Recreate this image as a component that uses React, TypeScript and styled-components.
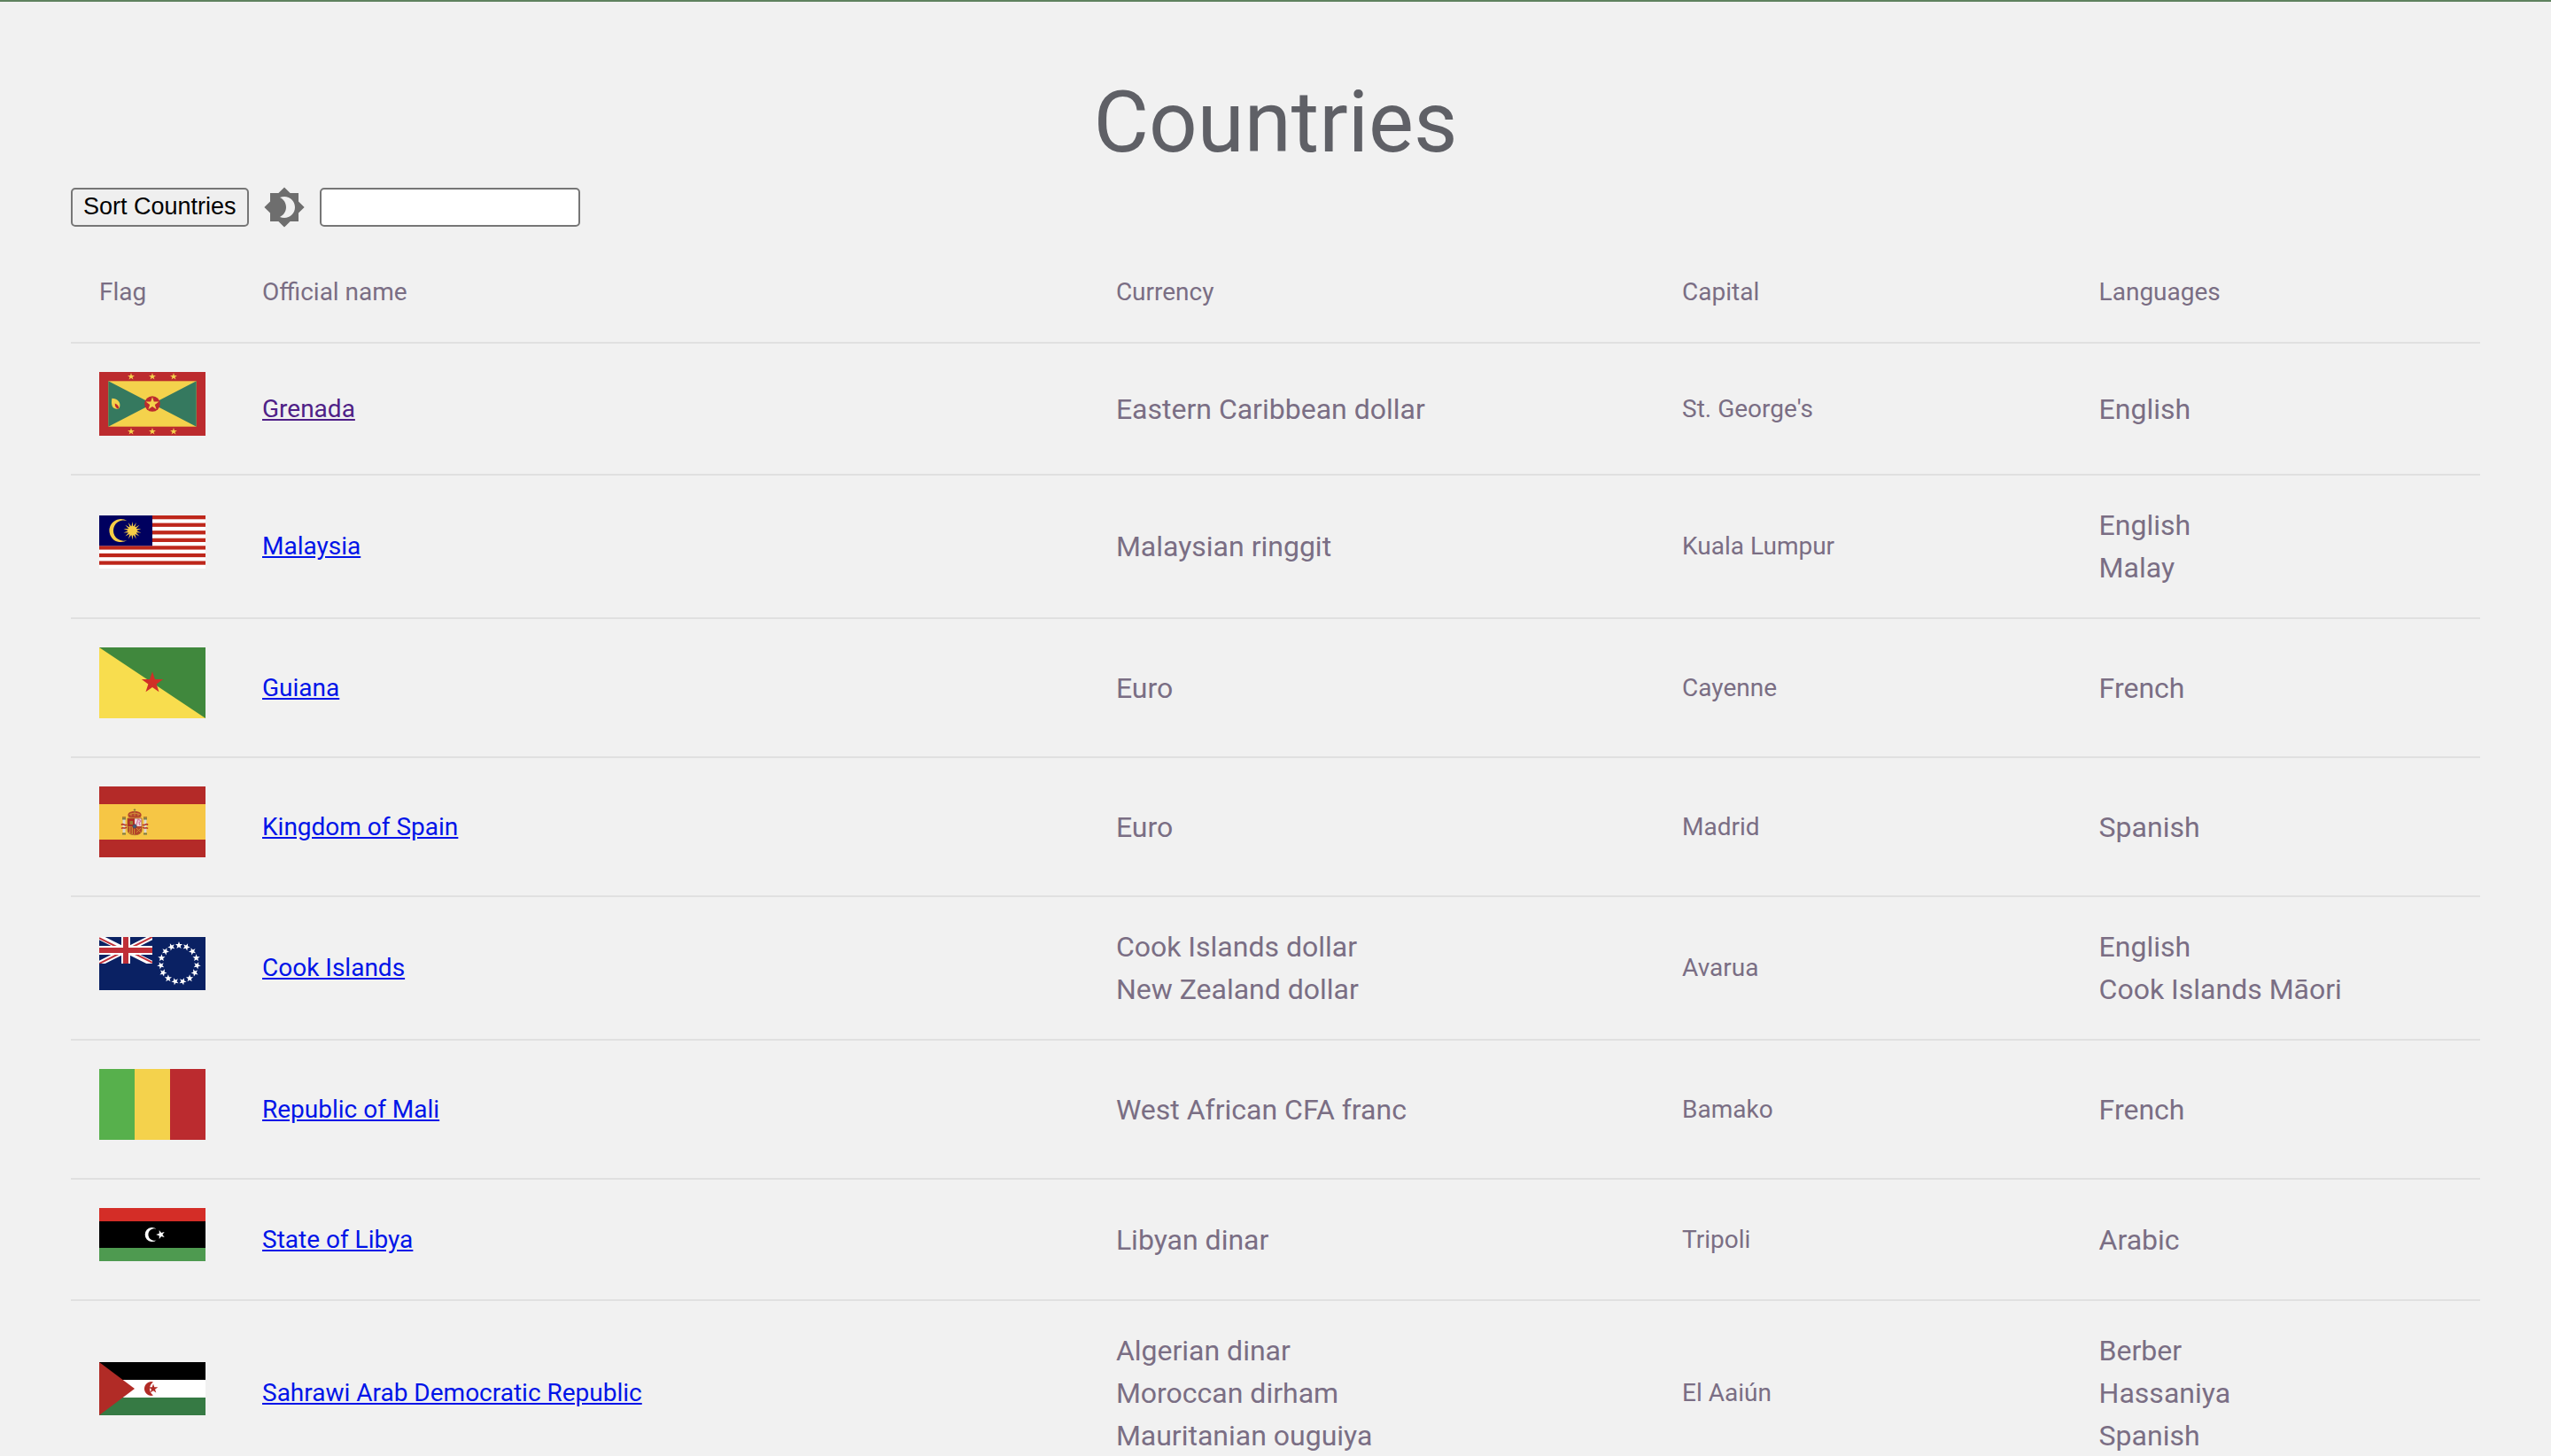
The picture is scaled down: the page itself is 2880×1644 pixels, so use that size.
import React, { useMemo, useState } from 'react';
import styled, { createGlobalStyle } from 'styled-components';

const GlobalStyle = createGlobalStyle`
  *, *::before, *::after { box-sizing: border-box; }
  body {
    margin: 0;
    background: #f1f1f1;
    font-family: Roboto, "Noto Sans", sans-serif;
    -webkit-font-smoothing: antialiased;
  }
`;

const Page = styled.main`
  border-top: 2px solid #5f825f;
  padding: 80px 80px 0;
`;

const Title = styled.h1`
  margin: 0;
  font-size: 96px;
  font-weight: 400;
  line-height: 112px;
  text-align: center;
  color: #5f6066;
`;

const Toolbar = styled.div`
  display: flex;
  align-items: center;
  gap: 16px;
  height: 48px;
  margin: 16px 0;
`;

const SortButton = styled.button`
  height: 44px;
  padding: 0 12px 2px;
  border: 2px solid #767676;
  border-radius: 5px;
  background: #efefef;
  color: #000;
  font: 27px "Liberation Sans", Arial, sans-serif;
`;

const ThemeButton = styled.button`
  display: flex;
  padding: 0;
  border: 0;
  background: none;
  color: #6e6e6e;
`;

const SearchInput = styled.input`
  width: 294px;
  height: 44px;
  padding: 2px 4px;
  border: 2px solid #767676;
  border-radius: 5px;
  background: #fff;
  font: 27px "Liberation Sans", Arial, sans-serif;
`;

const Table = styled.table`
  width: 100%;
  table-layout: fixed;
  border-collapse: separate;
  border-spacing: 0;
  font-size: 28px;
  line-height: 40px;
  color: #7a6e84;
`;

const HeadCell = styled.th<{ $width?: string }>`
  width: ${(p) => p.$width ?? 'auto'};
  padding: 32px;
  border-bottom: 2px solid #e0e0e0;
  font-weight: 400;
  line-height: 48px;
  text-align: left;
`;

const Cell = styled.td`
  padding: 32px;
  border-bottom: 2px solid #e0e0e0;
  vertical-align: middle;
`;

const CountryLink = styled.a<{ $visited?: boolean }>`
  color: ${(p) => (p.$visited ? '#4f1f87' : '#0014e8')};
`;

const List = styled.ul`
  margin: 0;
  padding: 0;
  list-style: none;
  font-size: 32px;
  line-height: 48px;
`;

const FlagSvg = styled.svg`
  width: 120px;
`;

const starPoints = (cx: number, cy: number, r: number, n = 5, inner = 0.382, start = -90) =>
  Array.from({ length: n * 2 }, (_, i) => {
    const a = ((start + (i * 180) / n) * Math.PI) / 180;
    const q = i % 2 ? r * inner : r;
    return `${(cx + q * Math.cos(a)).toFixed(2)},${(cy + q * Math.sin(a)).toFixed(2)}`;
  }).join(' ');

type StarProps = { x: number; y: number; r: number; fill: string; n?: number; inner?: number; start?: number };
const Star = ({ x, y, r, fill, n, inner, start }: StarProps) => (
  <polygon points={starPoints(x, y, r, n, inner, start)} fill={fill} />
);

const Flag = ({ h, label, children }: { h: number; label: string; children: React.ReactNode }) => (
  <FlagSvg viewBox={`0 0 120 ${h}`} height={h} role="img" aria-label={label}>
    {children}
  </FlagSvg>
);

const GrenadaFlag = () => (
  <Flag h={72} label="Flag of Grenada">
    <rect width="120" height="72" fill="#bc2b2e" />
    <rect x="10.3" y="10.3" width="99.4" height="51.4" fill="#f4d24c" />
    <path d="M10.3 10.3 60 36 10.3 61.7zM109.7 10.3 60 36l49.7 25.7z" fill="#35795f" />
    <circle cx="60" cy="36" r="8.8" fill="#bc2b2e" />
    <Star x={60} y={36} r={7.8} fill="#f4d24c" />
    {[36, 60, 84].map((x) => (
      <React.Fragment key={x}>
        <Star x={x} y={5.2} r={4.2} fill="#f4d24c" />
        <Star x={x} y={67.2} r={4.2} fill="#f4d24c" />
      </React.Fragment>
    ))}
    <path d="M14.4 29.8c4.4.4 8.2 2.2 8.9 6.4.4 2.6-.4 4.4-1.6 5.2-2.4.9-5.3.2-6.8-2.4-1.3-2.7-1-6.2-.5-9.2z" fill="#f4d24c" />
    <path d="M17.8 35.4c2.6 1 4.6 3 4.4 5.5l-1.4.5c-2-.8-3.3-3.2-3-6z" fill="#bc2b2e" />
  </Flag>
);

const MalaysiaFlag = () => (
  <Flag h={60} label="Flag of Malaysia">
    <rect width="120" height="60" fill="#fff" />
    {[0, 1, 2, 3, 4, 5, 6].map((i) => (
      <rect key={i} y={(i * 120) / 14} width="120" height={60 / 14} fill="#be271b" />
    ))}
    <rect width="60" height="34.3" fill="#00005f" />
    <path d="M31.5 6.2A13 13 0 1 0 31.5 28a11.6 11.6 0 1 1 0-21.8z" fill="#f7cd46" />
    <Star x={37.4} y={17.2} r={10.2} n={14} inner={0.44} fill="#f7cd46" />
    <circle cx="37.4" cy="17.2" r="5.2" fill="#f7cd46" />
  </Flag>
);

const GuianaFlag = () => (
  <Flag h={80} label="Flag of Guiana">
    <rect width="120" height="80" fill="#f8dd4e" />
    <path d="M0 0h120v80z" fill="#40883d" />
    <Star x={60} y={40} r={12.8} fill="#d02f27" />
  </Flag>
);

const SpainFlag = () => (
  <Flag h={80} label="Flag of Spain">
    <rect width="120" height="80" fill="#b42a28" />
    <rect y="20" width="120" height="40" fill="#f6c645" />
    <path d="M33 34.5c-2-4 1-6.500 7-6.500s9 2.500 7 6.500c-4 1.200-10 1.200-14 0z" fill="#b4452c" />
    <path d="M34 31.500q6-3 12 0M36 33.500v-3M40 33.500v-4M44 33.500v-3" stroke="#d9a03a" strokeWidth=".8" fill="none" />
    <path d="M40 25v4M38.700 26.500h2.600" stroke="#8a7a3a" strokeWidth="1" />
    <path d="M32 36h8v9h-8z" fill="#b02c26" />
    <path d="M40 36h8v9h-8z" fill="#ecd6da" />
    <path d="M42 43l2-6 3 2-2 2 1 3" stroke="#d878a0" strokeWidth="1.2" fill="none" />
    <path d="M32 45h8v9.500c-4 .5-8-1.500-8-5z" fill="#cf9c35" />
    <path d="M40 45h8v4.500c0 3.500-4 5.500-8 5z" fill="#b5452a" />
    <path d="M33.500 45.500v6M36 45.500v8M38.500 45.500v8.500" stroke="#b02c26" strokeWidth="1.2" />
    <path d="M42 47l5 5M47 47l-5 5" stroke="#cf9c35" strokeWidth=".8" />
    <path d="M34.500 43v-4h3.500v4z" fill="#9d7b35" />
    <path d="M32 36h16v13.500c0 3.500-4 5.200-8 5.200s-8-1.700-8-5.200z" stroke="#a5542c" strokeWidth=".8" fill="none" />
    <circle cx="40" cy="45" r="2.300" fill="#3d5c82" stroke="#7a3a3a" strokeWidth=".8" />
    <path d="M28 37v15M52 37v15" stroke="#dcd8cc" strokeWidth="2.800" />
    <path d="M26 36.300h4M50 36.300h4M26 53.500h4M50 53.500h4" stroke="#7d7c48" strokeWidth="2.200" />
    <path d="M26 34.600h4M50 34.600h4" stroke="#b57a30" strokeWidth="1.400" />
    <path d="M25 43.500c2-3 4 2 6-.5M31 46c-2 2.500-4-.5-6 1.500M55 43.500c-2-3-4 2-6-.5M49 46c2 2.500 4-.5 6 1.500" stroke="#b5362a" strokeWidth="1.500" fill="none" />
  </Flag>
);

const CookIslandsFlag = () => (
  <Flag h={60} label="Flag of Cook Islands">
    <rect width="120" height="60" fill="#0a2163" />
    <svg width="60" height="30" viewBox="0 0 60 30">
      <path d="M0 0 60 30M60 0 0 30" stroke="#fff" strokeWidth="6" />
      <path d="M0 1.2 30 16.2M60 28.8 30 13.8M60 0 30 15M0 30 30 15" stroke="#bf2f38" strokeWidth="2" />
      <path d="M30 0v30M0 15h60" stroke="#fff" strokeWidth="10" />
      <path d="M30 0v30M0 15h60" stroke="#bf2f38" strokeWidth="6" />
    </svg>
    {Array.from({ length: 15 }, (_, i) => {
      const a = ((i * 24 - 90) * Math.PI) / 180;
      return <Star key={i} x={90 + 20.6 * Math.cos(a)} y={30 + 20.6 * Math.sin(a)} r={4.3} inner={0.42} start={i * 24 - 90} fill="#fff" />;
    })}
  </Flag>
);

const MaliFlag = () => (
  <Flag h={80} label="Flag of Mali">
    <rect width="40" height="80" fill="#57b04c" />
    <rect x="40" width="40" height="80" fill="#f4d24c" />
    <rect x="80" width="40" height="80" fill="#bb2b2f" />
  </Flag>
);

const LibyaFlag = () => (
  <Flag h={60} label="Flag of Libya">
    <rect width="120" height="60" fill="#000" />
    <rect width="120" height="15" fill="#d42d27" />
    <rect y="45" width="120" height="15" fill="#4e9a50" />
    <path d="M64.5 23.6A8 8 0 1 0 64.5 36.4a6.8 6.8 0 1 1 0-12.8z" fill="#fff" />
    <Star x={69.4} y={30} r={5.3} start={-108} fill="#fff" />
  </Flag>
);

const SahrawiFlag = () => (
  <Flag h={60} label="Flag of Sahrawi Arab Democratic Republic">
    <rect width="120" height="60" fill="#fff" />
    <rect width="120" height="20" fill="#000" />
    <rect y="40" width="120" height="20" fill="#367a44" />
    <path d="M0 0 40 30 0 60z" fill="#b12b26" />
    <path d="M61 22.4A7.9 7.9 0 1 0 61 37.6a9.200 9.200 0 0 1 0-15.2z" fill="#b12b26" />
    <Star x={61} y={30} r={5.6} fill="#b12b26" />
  </Flag>
);

type Country = {
  name: string;
  flag: React.ComponentType;
  currencies: string[];
  capital: string;
  languages: string[];
  visited?: boolean;
};

const countries: Country[] = [
  { name: 'Grenada', flag: GrenadaFlag, currencies: ['Eastern Caribbean dollar'], capital: "St. George's", languages: ['English'], visited: true },
  { name: 'Malaysia', flag: MalaysiaFlag, currencies: ['Malaysian ringgit'], capital: 'Kuala Lumpur', languages: ['English', 'Malay'] },
  { name: 'Guiana', flag: GuianaFlag, currencies: ['Euro'], capital: 'Cayenne', languages: ['French'] },
  { name: 'Kingdom of Spain', flag: SpainFlag, currencies: ['Euro'], capital: 'Madrid', languages: ['Spanish'] },
  { name: 'Cook Islands', flag: CookIslandsFlag, currencies: ['Cook Islands dollar', 'New Zealand dollar'], capital: 'Avarua', languages: ['English', 'Cook Islands Māori'] },
  { name: 'Republic of Mali', flag: MaliFlag, currencies: ['West African CFA franc'], capital: 'Bamako', languages: ['French'] },
  { name: 'State of Libya', flag: LibyaFlag, currencies: ['Libyan dinar'], capital: 'Tripoli', languages: ['Arabic'] },
  { name: 'Sahrawi Arab Democratic Republic', flag: SahrawiFlag, currencies: ['Algerian dinar', 'Moroccan dirham', 'Mauritanian ouguiya'], capital: 'El Aaiún', languages: ['Berber', 'Hassaniya', 'Spanish'] },
];

const TextList = ({ items }: { items: string[] }) => (
  <List>
    {items.map((item) => (
      <li key={item}>{item}</li>
    ))}
  </List>
);

export default function App() {
  const [sorted, setSorted] = useState(false);
  const [query, setQuery] = useState('');

  const rows = useMemo(() => {
    const found = countries.filter((c) => c.name.toLowerCase().includes(query.toLowerCase()));
    return sorted ? [...found].sort((a, b) => a.name.localeCompare(b.name)) : found;
  }, [sorted, query]);

  return (
    <>
      <GlobalStyle />
      <Page>
        <Title>Countries</Title>
        <Toolbar>
          <SortButton type="button" onClick={() => setSorted((s) => !s)}>
            Sort Countries
          </SortButton>
          <ThemeButton type="button" aria-label="Toggle theme">
            <svg width="48" height="48" viewBox="0 0 24 24" fill="currentColor" aria-hidden="true">
              <path d="M20 8.69V4h-4.69L12 .69 8.69 4H4v4.69L.69 12 4 15.31V20h4.69L12 23.31 15.31 20H20v-4.69L23.31 12 20 8.69zM12 18c-.89 0-1.74-.2-2.5-.55C11.56 16.5 13 14.42 13 12s-1.44-4.5-3.5-5.45C10.26 6.2 11.11 6 12 6c3.31 0 6 2.69 6 6s-2.69 6-6 6z" />
            </svg>
          </ThemeButton>
          <SearchInput type="text" aria-label="Search countries" value={query} onChange={(e) => setQuery(e.target.value)} />
        </Toolbar>
        <Table>
          <thead>
            <tr>
              <HeadCell $width="184px">Flag</HeadCell>
              <HeadCell>Official name</HeadCell>
              <HeadCell $width="23.5%">Currency</HeadCell>
              <HeadCell $width="17.3%">Capital</HeadCell>
              <HeadCell $width="17%">Languages</HeadCell>
            </tr>
          </thead>
          <tbody>
            {rows.map(({ name, flag: CountryFlag, currencies, capital, languages, visited }) => (
              <tr key={name}>
                <Cell>
                  <CountryFlag />
                </Cell>
                <Cell>
                  <CountryLink href={`#${encodeURIComponent(name)}`} $visited={visited}>
                    {name}
                  </CountryLink>
                </Cell>
                <Cell>
                  <TextList items={currencies} />
                </Cell>
                <Cell>{capital}</Cell>
                <Cell>
                  <TextList items={languages} />
                </Cell>
              </tr>
            ))}
          </tbody>
        </Table>
      </Page>
    </>
  );
}
